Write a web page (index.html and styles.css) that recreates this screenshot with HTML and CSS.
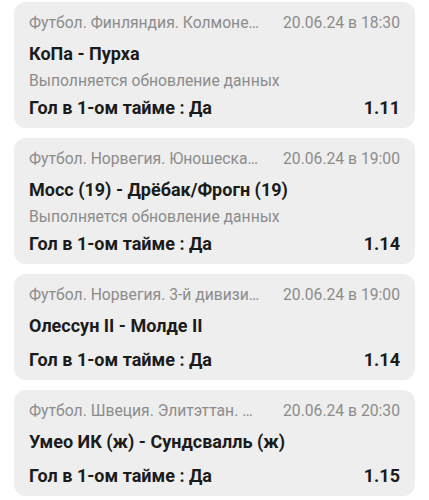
FILE: index.html
```html
<!DOCTYPE html>
<html lang="ru">
<head>
<meta charset="utf-8">
<link rel="stylesheet" href="styles.css">
</head>
<body>
<div class="list">
  <div class="card">
    <div class="head"><span class="league">Футбол. Финляндия. Колмонен. Группа</span><span class="date">20.06.24 в 18:30</span></div>
    <div class="team">КоПа - Пурха</div>
    <div class="status">Выполняется обновление данных</div>
    <div class="bet"><span>Гол в 1-ом тайме : Да</span><span class="odd">1.11</span></div>
  </div>
  <div class="card">
    <div class="head"><span class="league">Футбол. Норвегия. Юношеская лига</span><span class="date">20.06.24 в 19:00</span></div>
    <div class="team">Мосс (19) - Дрёбак/Фрогн (19)</div>
    <div class="status">Выполняется обновление данных</div>
    <div class="bet"><span>Гол в 1-ом тайме : Да</span><span class="odd">1.14</span></div>
  </div>
  <div class="card">
    <div class="head"><span class="league">Футбол. Норвегия. 3-й дивизион. Группа 2</span><span class="date">20.06.24 в 19:00</span></div>
    <div class="team">Олессун II - Молде II</div>
    <div class="bet"><span>Гол в 1-ом тайме : Да</span><span class="odd">1.14</span></div>
  </div>
  <div class="card">
    <div class="head"><span class="league">Футбол. Швеция. Элитэттан. Женщины</span><span class="date">20.06.24 в 20:30</span></div>
    <div class="team">Умео ИК (ж) - Сундсвалль (ж)</div>
    <div class="bet"><span>Гол в 1-ом тайме : Да</span><span class="odd">1.15</span></div>
  </div>
</div>
</body>
</html>
```
FILE: styles.css
```css
html, body {
  margin: 0;
  padding: 0;
  background: #ffffff;
}
body {
  font-family: Roboto, "Noto Sans", sans-serif;
  color: #1b1b1b;
}
.list {
  display: flex;
  flex-direction: column;
  gap: 10px;
  padding: 2px 14px 0;
}
.card {
  background: #eeeeee;
  border-radius: 12px;
  padding: 11px 15px 8px;
}
.head {
  display: flex;
  justify-content: space-between;
  gap: 20px;
  font-size: 15.7px;
  line-height: 20px;
  color: #8c8c8c;
}
.league {
  flex: 1;
  min-width: 0;
  white-space: nowrap;
  overflow: hidden;
  text-overflow: ellipsis;
}
.date {
  flex: none;
  white-space: nowrap;
}
.team {
  margin-top: 9px;
  font-size: 18px;
  line-height: 24px;
  font-weight: 700;
}
.status {
  margin-top: 6px;
  font-size: 15.7px;
  line-height: 18px;
  color: #8c8c8c;
}
.bet {
  margin-top: 10px;
  display: flex;
  justify-content: space-between;
  font-size: 18px;
  line-height: 24px;
  font-weight: 700;
}
.status + .bet {
  margin-top: 6px;
}
```
